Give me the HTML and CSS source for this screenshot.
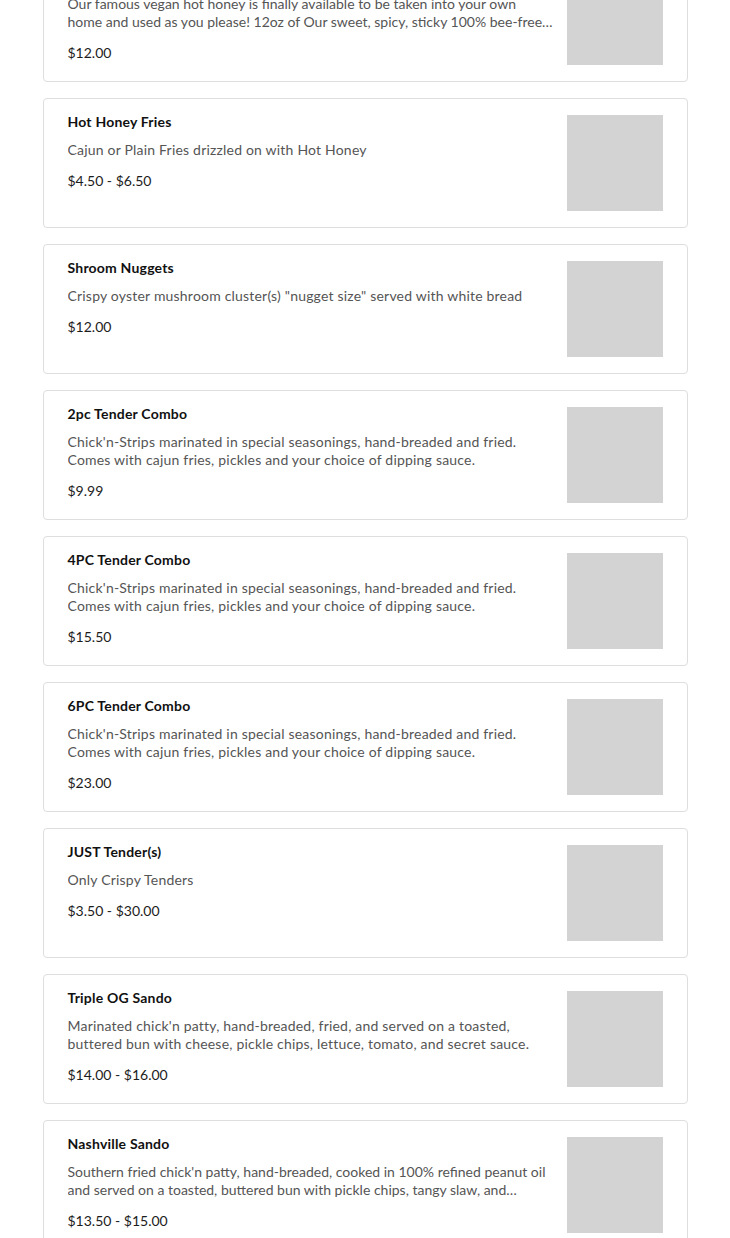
FILE: index.html
```html
<!DOCTYPE html>
<html lang="en">
<head>
<meta charset="utf-8">
<title>Menu</title>
<link rel="stylesheet" href="styles.css">
</head>
<body>
<div class="menu">
  <div class="item">
    <div class="info">
      <div class="name">Hot Honey 12oz</div>
      <div class="desc fit">Our famous vegan hot honey is finally available to be taken into your own<br>home and used as you please! 12oz of Our sweet, spicy, sticky 100% bee-free hot honey made in house.</div>
      <div class="price">$12.00</div>
    </div>
    <div class="thumb"></div>
  </div>
  <div class="item">
    <div class="info">
      <div class="name">Hot Honey Fries</div>
      <div class="desc">Cajun or Plain Fries drizzled on with Hot Honey</div>
      <div class="price">$4.50 - $6.50</div>
    </div>
    <div class="thumb"></div>
  </div>
  <div class="item">
    <div class="info">
      <div class="name">Shroom Nuggets</div>
      <div class="desc">Crispy oyster mushroom cluster(s) "nugget size" served with white bread</div>
      <div class="price">$12.00</div>
    </div>
    <div class="thumb"></div>
  </div>
  <div class="item">
    <div class="info">
      <div class="name">2pc Tender Combo</div>
      <div class="desc">Chick'n-Strips marinated in special seasonings, hand-breaded and fried. Comes with cajun fries, pickles and your choice of dipping sauce.</div>
      <div class="price">$9.99</div>
    </div>
    <div class="thumb"></div>
  </div>
  <div class="item">
    <div class="info">
      <div class="name">4PC Tender Combo</div>
      <div class="desc">Chick'n-Strips marinated in special seasonings, hand-breaded and fried. Comes with cajun fries, pickles and your choice of dipping sauce.</div>
      <div class="price">$15.50</div>
    </div>
    <div class="thumb"></div>
  </div>
  <div class="item">
    <div class="info">
      <div class="name">6PC Tender Combo</div>
      <div class="desc">Chick'n-Strips marinated in special seasonings, hand-breaded and fried. Comes with cajun fries, pickles and your choice of dipping sauce.</div>
      <div class="price">$23.00</div>
    </div>
    <div class="thumb"></div>
  </div>
  <div class="item">
    <div class="info">
      <div class="name">JUST Tender(s)</div>
      <div class="desc">Only Crispy Tenders</div>
      <div class="price">$3.50 - $30.00</div>
    </div>
    <div class="thumb"></div>
  </div>
  <div class="item">
    <div class="info">
      <div class="name">Triple OG Sando</div>
      <div class="desc">Marinated chick'n patty, hand-breaded, fried, and served on a toasted, buttered bun with cheese, pickle chips, lettuce, tomato, and secret sauce.</div>
      <div class="price">$14.00 - $16.00</div>
    </div>
    <div class="thumb"></div>
  </div>
  <div class="item">
    <div class="info">
      <div class="name">Nashville Sando</div>
      <div class="desc fit">Southern fried chick'n patty, hand-breaded, cooked in 100% refined peanut oil<br>and served on a toasted, buttered bun with pickle chips, tangy slaw, and housemade comeback sauce.</div>
      <div class="price">$13.50 - $15.00</div>
    </div>
    <div class="thumb"></div>
  </div>
</div>
</body>
</html>
```

FILE: styles.css
```css
* { box-sizing: border-box; }
html, body { margin: 0; padding: 0; background: #fff; }
body {
  font-family: "Lato", "Liberation Sans", sans-serif;
  color: #1c1c1c;
  overflow: hidden;
}
.menu {
  width: 645px;
  margin: -48px auto 0;
  display: flex;
  flex-direction: column;
  gap: 16px;
}
.item {
  display: flex;
  gap: 12px;
  border: 1px solid #dedede;
  border-radius: 4px;
  padding: 16px 24px;
  background: #fff;
}
.info {
  flex: 1;
  min-width: 0;
  display: flex;
  flex-direction: column;
}
.name {
  font-size: 14px;
  font-weight: 700;
  line-height: 18px;
  margin-top: -2px;
  letter-spacing: 0.2px;
  color: #111;
}
.desc {
  font-size: 14px;
  line-height: 18px;
  letter-spacing: 0.2px;
  color: #555;
  margin-top: 10px;
  display: -webkit-box;
  -webkit-line-clamp: 2;
  -webkit-box-orient: vertical;
  overflow: hidden;
}
.desc.fit {
  letter-spacing: 0;
}
.price {
  font-size: 14px;
  line-height: 18px;
  color: #1c1c1c;
  margin-top: 13px;
}
.thumb {
  width: 96px;
  height: 96px;
  flex: none;
  background: #d3d3d3;
}
```
